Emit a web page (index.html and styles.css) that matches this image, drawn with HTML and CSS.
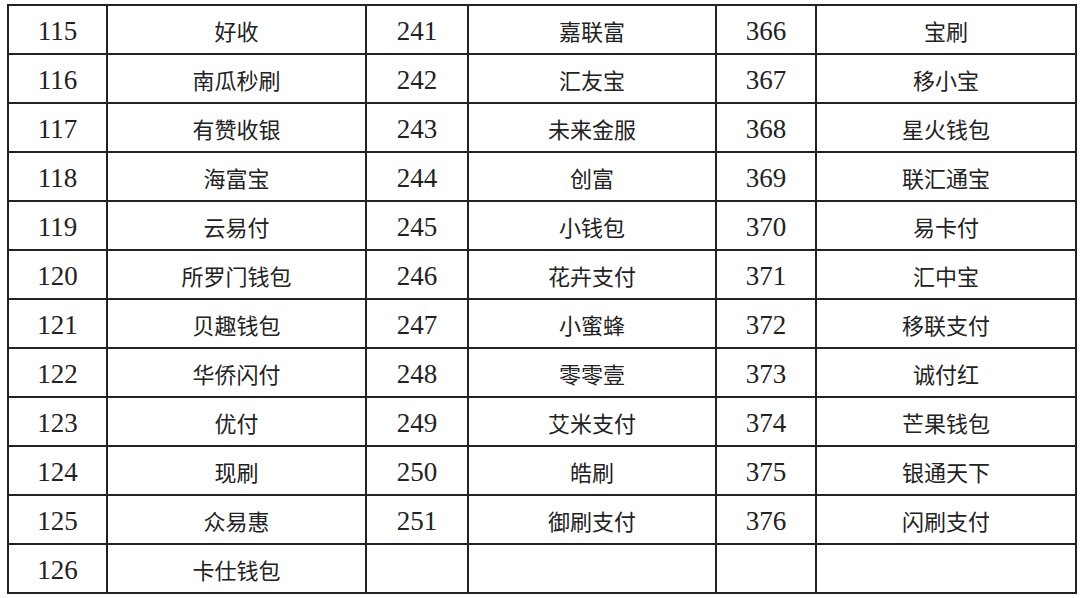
FILE: index.html
```html
<!DOCTYPE html>
<html lang="zh">
<head>
<meta charset="utf-8">
<title>支付列表</title>
<link rel="stylesheet" href="styles.css">
</head>
<body>
<table class="list">
<colgroup>
<col class="c-num1"><col class="c-name1"><col class="c-num2"><col class="c-name2"><col class="c-num3"><col class="c-name3">
</colgroup>
<tbody>
<tr><td class="num">115</td><td class="name">好收</td><td class="num">241</td><td class="name">嘉联富</td><td class="num">366</td><td class="name">宝刷</td></tr>
<tr><td class="num">116</td><td class="name">南瓜秒刷</td><td class="num">242</td><td class="name">汇友宝</td><td class="num">367</td><td class="name">移小宝</td></tr>
<tr><td class="num">117</td><td class="name">有赞收银</td><td class="num">243</td><td class="name">未来金服</td><td class="num">368</td><td class="name">星火钱包</td></tr>
<tr><td class="num">118</td><td class="name">海富宝</td><td class="num">244</td><td class="name">创富</td><td class="num">369</td><td class="name">联汇通宝</td></tr>
<tr><td class="num">119</td><td class="name">云易付</td><td class="num">245</td><td class="name">小钱包</td><td class="num">370</td><td class="name">易卡付</td></tr>
<tr><td class="num">120</td><td class="name">所罗门钱包</td><td class="num">246</td><td class="name">花卉支付</td><td class="num">371</td><td class="name">汇中宝</td></tr>
<tr><td class="num">121</td><td class="name">贝趣钱包</td><td class="num">247</td><td class="name">小蜜蜂</td><td class="num">372</td><td class="name">移联支付</td></tr>
<tr><td class="num">122</td><td class="name">华侨闪付</td><td class="num">248</td><td class="name">零零壹</td><td class="num">373</td><td class="name">诚付红</td></tr>
<tr><td class="num">123</td><td class="name">优付</td><td class="num">249</td><td class="name">艾米支付</td><td class="num">374</td><td class="name">芒果钱包</td></tr>
<tr><td class="num">124</td><td class="name">现刷</td><td class="num">250</td><td class="name">皓刷</td><td class="num">375</td><td class="name">银通天下</td></tr>
<tr><td class="num">125</td><td class="name">众易惠</td><td class="num">251</td><td class="name">御刷支付</td><td class="num">376</td><td class="name">闪刷支付</td></tr>
<tr><td class="num">126</td><td class="name">卡仕钱包</td><td class="num"></td><td class="name"></td><td class="num"></td><td class="name"></td></tr>
</tbody>
</table>
</body>
</html>
```

FILE: styles.css
```css
html, body {
  margin: 0;
  padding: 0;
  background: #ffffff;
}
body {
  padding: 4px 0 0 7px;
}
.list {
  border-collapse: collapse;
  table-layout: fixed;
  width: 1068px;
  color: #222222;
}
.c-num1 { width: 99px; }
.c-name1 { width: 259px; }
.c-num2 { width: 102px; }
.c-name2 { width: 248px; }
.c-num3 { width: 100px; }
.c-name3 { width: 260px; }
.list tr {
  height: 49px;
}
.list td {
  border: 2px solid #222222;
  padding: 0;
  text-align: center;
  vertical-align: middle;
}
.list td.num {
  font-family: "Liberation Serif", "DejaVu Serif", serif;
  font-size: 27px;
  line-height: 1;
  padding-top: 3px;
}
.list td.name {
  font-family: "Noto Sans CJK SC", "Noto Sans", sans-serif;
  font-size: 22px;
  line-height: 1;
  padding-top: 1px;
}
```
